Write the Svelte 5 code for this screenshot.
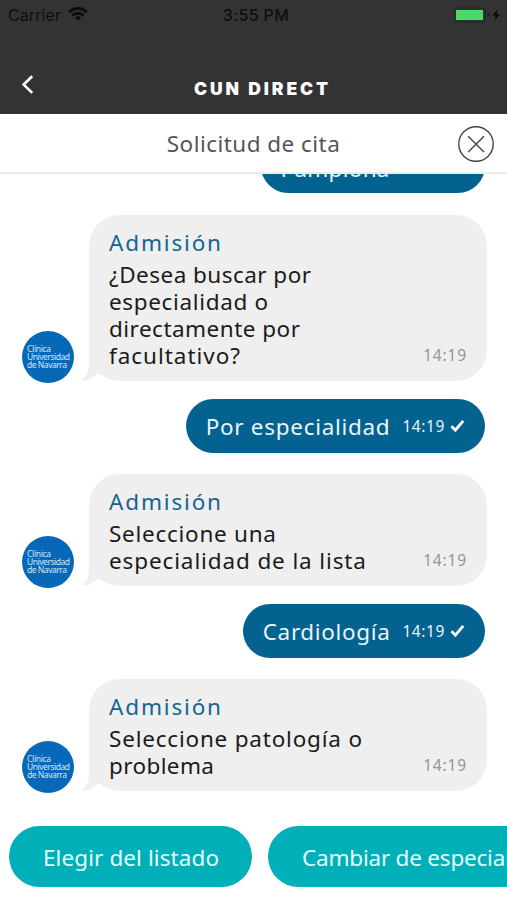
<script>
  // Spreads the letters of a line so that it takes the given width.
  function fit(node, width) {
    node.style.letterSpacing = '0px';
    const natural = node.getBoundingClientRect().width;
    const count = node.textContent.length;
    node.style.letterSpacing = `${(width - natural) / (count - 1)}px`;
  }

  const sender = 'Admisión';
  const messages = [
    { out: true, time: '14:19', lines: [['Pamplona', 109]] },
    {
      time: '14:19',
      lines: [
        ['¿Desea buscar por', 202],
        ['especialidad o', 159],
        ['directamente por', 191],
        ['facultativo?', 131]
      ]
    },
    { out: true, time: '14:19', lines: [['Por especialidad', 184]] },
    { time: '14:19', lines: [['Seleccione una', 167], ['especialidad de la lista', 257]] },
    { out: true, time: '14:19', lines: [['Cardiología', 127]] },
    { time: '14:19', lines: [['Seleccione patología o', 253], ['problema', 105]] }
  ];
  const options = [['Elegir del listado', 176], ['Cambiar de especialidad', 254]];
</script>

<div class="screen">
  <header>
    <div class="status">
      <div class="carrier">
        <span use:fit={53}>Carrier</span>
        <svg width="20" height="14" viewBox="0 0 20 14" fill="none" stroke="#0c0c0c" stroke-width="3">
          <path d="M1.2 5.2C6.2.3 13.8.3 18.8 5.2M4.5 8.4c3.2-3 7.8-3 11 0" />
          <path d="M10 13.4 6.9 10.4c1.8-1.6 4.4-1.6 6.2 0Z" fill="#0c0c0c" stroke="none" />
        </svg>
      </div>
      <span class="clock"><span use:fit={66}>3:55 PM</span></span>
      <svg class="battery" width="48" height="16" viewBox="0 0 48 16">
        <rect x="-.3" y="1.2" width="30.6" height="13.4" rx="2.5" fill="#303431" stroke="#202b23" stroke-width="1.2" />
        <rect x="1" y="3" width="27" height="10" fill="#4cda64" />
        <path d="M32.5 5.5v4.2q1.6-.4 1.6-2.1t-1.6-2.1Z" fill="#1c1c1c" />
        <path d="M42.8 2.3 37.3 8.6h3.4L39.4 13.4 45 6.9h-3.4Z" fill="#080808" />
      </svg>
    </div>
    <div class="nav">
      <svg width="14" height="20" viewBox="0 0 14 20" fill="none" stroke="#fff" stroke-width="2.7">
        <path d="M11.2 1.3 2.7 9.6l8.5 8.3" />
      </svg>
      <h1><span use:fit={134}>CUN DIRECT</span></h1>
    </div>
  </header>

  <div class="subject">
    <h2><span use:fit={173}>Solicitud de cita</span></h2>
    <svg width="38" height="38" viewBox="0 0 38 38" fill="none" stroke="#454545" stroke-width="1.4">
      <circle cx="19" cy="19" r="17.2" />
      <path d="m11.2 11.2 15.8 15.8M27 11.2 11.2 27" />
    </svg>
  </div>

  <main>
    {#each messages as m}
      {#if m.out}
        <div class="out">
          <span class="text" use:fit={m.lines[0][1]}>{m.lines[0][0]}</span>
          <time><span use:fit={42}>{m.time}</span></time>
          <svg width="15" height="14" viewBox="0 0 15 14" fill="none" stroke="#fff" stroke-width="2.8">
            <path d="M1.5 7.3 5.4 11.2 13.2 1.8" />
          </svg>
        </div>
      {:else}
        <div class="in">
          <div class="avatar">
            <span use:fit={24}>Clínica</span>
            <span use:fit={43}>Universidad</span>
            <span use:fit={40}>de Navarra</span>
          </div>
          <div class="bubble">
            <svg class="tail" width="32" height="40" viewBox="0 0 32 40">
              <path d="M8 0v24Q8 35 0 39.5Q9 40.5 17 32.5L32 39V0Z" fill="#efefef" />
            </svg>
            <div class="body">
              <div class="sender"><span use:fit={112}>{sender}</span></div>
              {#each m.lines as [line, width]}
                <div class="line"><span use:fit={width}>{line}</span></div>
              {/each}
            </div>
            <time><span use:fit={43}>{m.time}</span></time>
          </div>
        </div>
      {/if}
    {/each}
  </main>

  <footer>
    {#each options as [label, width]}
      <button><span use:fit={width}>{label}</span></button>
    {/each}
  </footer>
</div>

<style>
  .screen {
    width: 507px;
    height: 900px;
    overflow: hidden;
    display: flex;
    flex-direction: column;
    background: #fff;
    font-family: 'Noto Sans', sans-serif;
    white-space: nowrap;
  }
  header {
    height: 114px;
    background: #333;
    flex: none;
  }
  .status {
    height: 30px;
    display: grid;
    grid-template-columns: 1fr auto 1fr;
    align-items: center;
    padding: 0 3px 0 8px;
    color: #0e0e0e;
    font: 16px/30px Inter, sans-serif;
  }
  .carrier {
    display: flex;
    align-items: center;
    gap: 7px;
    margin-top: -1px;
  }
  .carrier svg { margin-top: -1px; }
  .clock { font-weight: 500; margin-top: -1px; }
  .battery { justify-self: end; margin: -1px 1px 0 0; overflow: visible; }
  .nav {
    height: 84px;
    display: grid;
    grid-template-columns: 60px 1fr 60px;
    align-items: center;
  }
  .nav svg { margin: 25px 0 0 21px; }
  h1 {
    margin: 33px 0 0 18px;
    text-align: center;
    color: #fff;
    font: 900 17.5px/24px Inter, sans-serif;
  }
  .subject {
    box-sizing: border-box;
    flex: none;
    height: 60px;
    border-bottom: 2px solid #ececec;
    display: grid;
    grid-template-columns: 50px 1fr 50px;
    align-items: center;
  }
  .subject svg { margin-top: 1px; }
  h2 {
    grid-column: 2;
    margin: 1px 0 0;
    text-align: center;
    color: #555;
    font-size: 22.5px;
    font-weight: 400;
    line-height: 30px;
  }
  main {
    height: 634px;
    flex: none;
    overflow: hidden;
    display: flex;
    flex-direction: column;
  }
  .out {
    box-sizing: border-box;
    align-self: flex-end;
    flex: none;
    height: 54px;
    margin: 0 22px 21px 0;
    padding: 0 20px 0 19.5px;
    border-radius: 27px;
    background: #03628f;
    color: #e9f6fc;
    display: flex;
    align-items: center;
    font-size: 22.5px;
  }
  .out:first-child { margin-top: -35px; margin-bottom: 22px; width: 224px; }
  .out:first-child .text { margin-top: 5px; }
  .out time { margin: 0 5px 0 12px; font-size: 15.5px; }
  .in {
    flex: none;
    display: flex;
    align-items: flex-end;
    margin: 0 20px 18px 22px;
  }
  .avatar {
    box-sizing: border-box;
    width: 52px;
    height: 52px;
    margin: 0 15px -2px 0;
    padding: 14px 0 0 5px;
    border-radius: 50%;
    background: #0868b8;
    color: #cfe6f7;
    display: flex;
    flex-direction: column;
    align-items: flex-start;
    font-size: 8.5px;
    line-height: 8px;
  }
  .bubble {
    position: relative;
    flex: 1;
    display: flex;
    justify-content: space-between;
    align-items: flex-end;
    padding: 13px 20px 12px;
    border-radius: 31px;
    background: #efefef;
  }
  .tail {
    position: absolute;
    left: -8px;
    bottom: 0;
  }
  .body { position: relative; color: #1b1b1b; font-size: 22.5px; }
  .sender { color: #16648f; line-height: 30px; margin-bottom: 3px; }
  .line { line-height: 27px; }
  .bubble time { color: #949494; font-size: 15.5px; line-height: 28px; }
  footer {
    display: flex;
    gap: 16px;
    padding: 18px 0 0 9px;
  }
  button {
    flex: none;
    height: 61px;
    padding: 2px 33px 0 34px;
    border: 0;
    border-radius: 31px;
    background: #00afb7;
    color: #e5ffff;
    font: 22.5px 'Noto Sans', sans-serif;
  }
</style>
